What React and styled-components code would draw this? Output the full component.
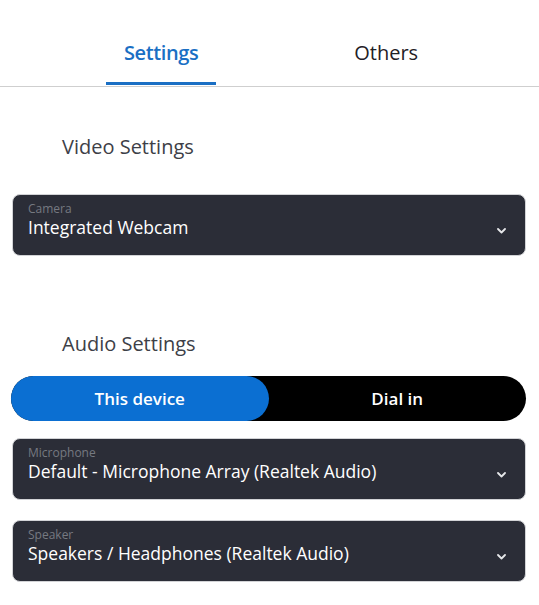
import React, { useState } from 'react';
import styled, { createGlobalStyle } from 'styled-components';

const GlobalStyle = createGlobalStyle`
  body {
    margin: 0;
    background: #ffffff;
    font-family: "Open Sans", "Liberation Sans", sans-serif;
  }
`;

function Chevron() {
  return (
    <svg width="9" height="6" viewBox="0 0 9 6" fill="none">
      <path d="M1 1l3.5 3.5L8 1" stroke="#e6e7ea" strokeWidth="1.8" strokeLinecap="round" strokeLinejoin="round" />
    </svg>
  );
}

function SelectBox({ label, value }) {
  return (
    <Select>
      <Label>{label}</Label>
      <ValueRow>
        <Value>{value}</Value>
        <Chevron />
      </ValueRow>
    </Select>
  );
}

function App() {
  const [tab, setTab] = useState(0);
  const [mode, setMode] = useState(0);

  return (
    <Page>
      <GlobalStyle />
      <TabBar>
        <Tab active={tab === 0} onClick={() => setTab(0)}>Settings</Tab>
        <Tab active={tab === 1} onClick={() => setTab(1)}>Others</Tab>
      </TabBar>

      <Content>
        <Heading>Video Settings</Heading>
        <SelectBox label="Camera" value="Integrated Webcam" />

        <Heading audio>Audio Settings</Heading>
        <Toggle>
          <ToggleOption active={mode === 0} onClick={() => setMode(0)}>This device</ToggleOption>
          <ToggleOption active={mode === 1} onClick={() => setMode(1)}>Dial in</ToggleOption>
        </Toggle>
        <Stack>
          <SelectBox label="Microphone" value="Default - Microphone Array (Realtek Audio)" />
          <SelectBox label="Speaker" value="Speakers / Headphones (Realtek Audio)" />
        </Stack>
      </Content>
    </Page>
  );
}

const Page = styled.div`
  width: 539px;
  min-height: 605px;
  background: #fff;
`;

const TabBar = styled.div`
  display: flex;
  align-items: flex-end;
  gap: 120px;
  padding: 39px 0 0 106px;
  border-bottom: 1px solid #cfcfcf;
`;

const Tab = styled.div`
  padding: 0 18px 15px;
  margin-bottom: 1px;
  font-size: 20px;
  line-height: 28px;
  font-weight: ${({ active }) => (active ? 600 : 400)};
  letter-spacing: ${({ active }) => (active ? '-0.4px' : '0')};
  color: ${({ active }) => (active ? '#1a6fc4' : '#1f2126')};
  border-bottom: 3px solid ${({ active }) => (active ? '#1a6fc4' : 'transparent')};
  cursor: pointer;
`;

const Content = styled.div`
  padding: 0 13px 0 12px;
`;

const Heading = styled.div`
  padding-left: 50px;
  margin: ${({ audio }) => (audio ? '74px 0 19px' : '46px 0 34px')};
  font-size: 20px;
  line-height: 27px;
  color: #3d4047;
`;

const Select = styled.div`
  display: flex;
  flex-direction: column;
  padding: 6px 19px 17px 15px;
  background: #2b2d37;
  border: 1px solid #d2d3d6;
  border-radius: 8px;
  cursor: pointer;
`;

const Label = styled.div`
  font-size: 12px;
  line-height: 16px;
  color: #767981;
`;

const ValueRow = styled.div`
  display: flex;
  align-items: center;
  justify-content: space-between;
  svg {
    margin-top: 7px;
  }
`;

const Value = styled.div`
  font-size: 17.5px;
  line-height: 21px;
  color: #ffffff;
`;

const Toggle = styled.div`
  display: flex;
  height: 45px;
  margin-left: -1px;
  background: #000;
  border-radius: 23px;
`;

const ToggleOption = styled.div`
  flex: 1;
  display: flex;
  align-items: center;
  justify-content: center;
  border-radius: 23px;
  background: ${({ active }) => (active ? '#0b6fd2' : 'transparent')};
  color: #fff;
  font-size: 17px;
  font-weight: 600;
  cursor: pointer;
`;

const Stack = styled.div`
  display: flex;
  flex-direction: column;
  gap: 20px;
  margin-top: 17px;
`;

export default App;
